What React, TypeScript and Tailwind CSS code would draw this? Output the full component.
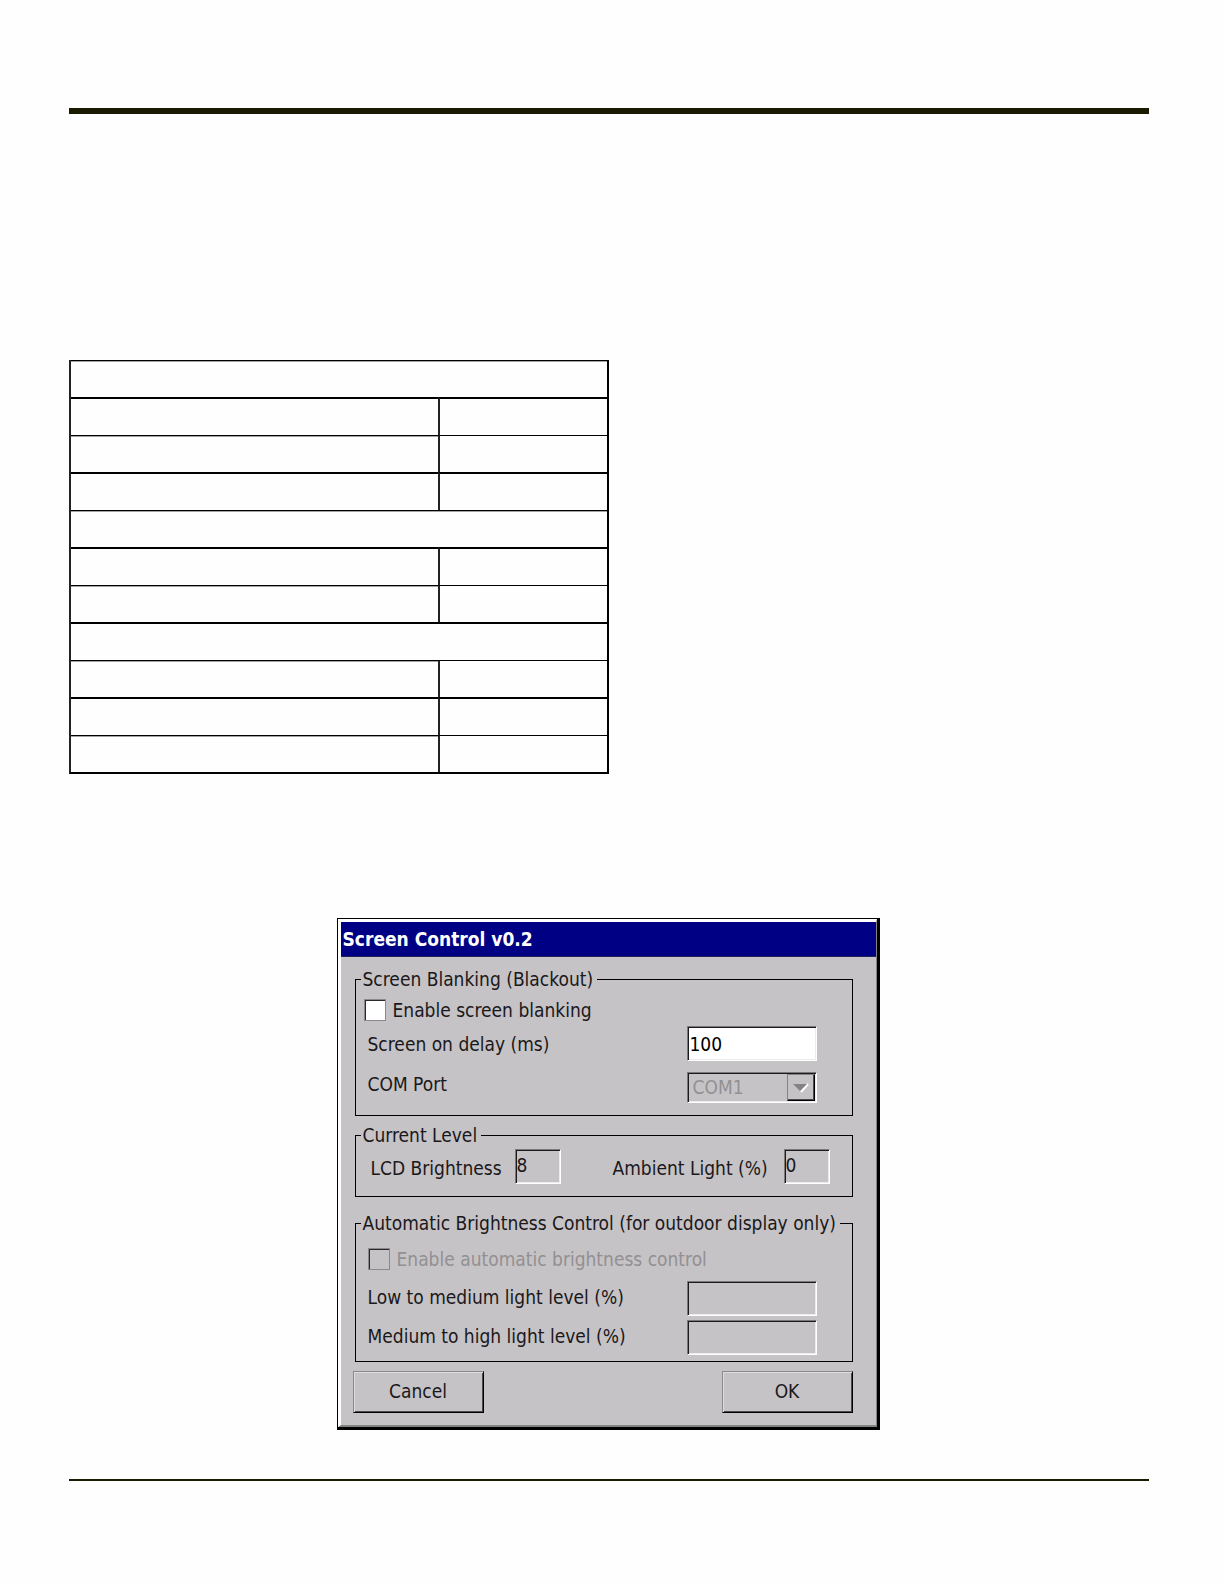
import React from "react";
import type { ReactNode } from "react";

const rows: boolean[] = [true, false, false, false, true, false, false, true, false, false, false];

function SpecTable() {
  return (
    <table className="w-1/2 table-fixed border-separate border-spacing-0 border-x-2 border-b-2 border-black border-l-[#222222]">
      <colgroup>
        <col className="w-[68.5%]" />
        <col />
      </colgroup>
      <tbody>
        {rows.map((full, i) => {
          const size = i % 2 === 0 ? "h-[37px] border-t" : "h-[38px] border-t-2";
          const soft = i % 2 === 0 ? "shadow-[inset_0_1px_0_#a3a3a3]" : "";
          return (
            <tr key={i}>
              {full ? (
                <td colSpan={2} className={`${size} ${soft} border-black p-0`} />
              ) : (
                <>
                  <td className={`${size} ${soft} border-black p-0`} />
                  <td className={`${size} border-l-2 border-black border-l-[#222222] p-0`} />
                </>
              )}
            </tr>
          );
        })}
      </tbody>
    </table>
  );
}

const sunken =
  "border border-t-[#7a787a] border-l-[#7a787a] border-r-white border-b-white shadow-[inset_1px_1px_0_#1c1a1c,inset_-1px_-1px_0_#ececec] rounded-none outline-none";

function Group({
  title,
  className,
  bodyClassName,
  children,
}: {
  title: string;
  className?: string;
  bodyClassName: string;
  children: ReactNode;
}) {
  return (
    <fieldset className={`ml-[2px] min-w-0 border border-black ${className ?? ""}`}>
      <legend className="ml-[5px] pr-1 pl-[2px] leading-6 whitespace-nowrap">{title}</legend>
      <div className={bodyClassName}>{children}</div>
    </fieldset>
  );
}

function Check({ id, label, disabled }: { id: string; label: string; disabled?: boolean }) {
  return (
    <div className="flex h-[22px] items-center gap-[7px]">
      <input
        id={id}
        type="checkbox"
        disabled={disabled}
        className="size-[22px] shrink-0 appearance-none border border-[#8b898b] bg-white shadow-[inset_1px_1px_0_#2a282a] disabled:bg-transparent"
      />
      <label htmlFor={id} className={disabled ? "leading-6 text-[#929092]" : "leading-6"}>
        {label}
      </label>
    </div>
  );
}

function LevelInput({ id, label }: { id: string; label: string }) {
  return (
    <div className="flex h-[35px] items-start justify-between">
      <label htmlFor={id} className="pt-1 leading-6">
        {label}
      </label>
      <input id={id} type="text" disabled className={`h-[35px] w-[130px] bg-transparent px-1 ${sunken}`} />
    </div>
  );
}

function DialogButton({ children }: { children: ReactNode }) {
  return (
    <button
      type="button"
      className="h-[42px] w-[131px] border border-t-[#8b898b] border-r-black border-b-black border-l-[#8b898b] pb-[2px] shadow-[inset_1px_1px_0_#dddbdd,inset_-1px_-1px_0_#4a484a]"
    >
      {children}
    </button>
  );
}

function ScreenControl() {
  return (
    <section
      aria-label="Screen Control"
      className="w-full max-w-[543px] border-t border-r-[3px] border-b-[3px] border-l border-black bg-[#c6c3c6] text-[19px] text-[#1a181a] [font-family:'DejaVu_Sans_Condensed','DejaVu_Sans',sans-serif]"
    >
      <div className="border-t-[3px] border-r border-b-2 border-l-[3px] border-t-white border-r-[#848284] border-b-[#848284] border-l-white">
        <h1 className="h-[35px] border-b border-[#20205a] bg-[#000084] pl-[2px] leading-[34px] font-bold text-white">
          Screen Control v0.2
        </h1>
        <form className="pt-[10px] pr-[23px] pb-3 pl-3">
          <Group title="Screen Blanking (Blackout)" bodyClassName="pt-2 pr-[35px] pb-3">
            <div className="pl-2">
              <Check id="blanking" label="Enable screen blanking" />
            </div>
            <div className="mt-[5px] flex items-start justify-between pl-3">
              <label htmlFor="delay" className="pt-[6px] leading-6">
                Screen on delay (ms)
              </label>
              <input
                id="delay"
                type="text"
                defaultValue="100"
                className={`h-[35px] w-[130px] bg-white px-[2px] text-black ${sunken}`}
              />
            </div>
            <div className="mt-[11px] flex h-[31px] items-start justify-between pl-3">
              <label htmlFor="port" className="leading-6">
                COM Port
              </label>
              <div className="relative">
                <select
                  id="port"
                  disabled
                  className={`block h-[31px] w-[130px] appearance-none bg-transparent pl-[5px] text-[#929092] opacity-100 ${sunken}`}
                >
                  <option>COM1</option>
                </select>
                <span className="pointer-events-none absolute top-[2px] right-[2px] flex h-[27px] w-7 items-center justify-center border border-t-[#848284] border-r-black border-b-black border-l-[#848284] shadow-[inset_-1px_-1px_0_#4a484a]">
                  <svg width="16" height="10" viewBox="0 0 16 10" aria-hidden="true">
                    <path d="M15 1 L8 9" stroke="white" strokeWidth="2" />
                    <path d="M0 1 H14 L7 8 Z" fill="#848284" />
                  </svg>
                </span>
              </div>
            </div>
          </Group>

          <Group title="Current Level" className="mt-[7px]" bodyClassName="pt-[2px] pr-[22px] pb-3 pl-[15px]">
            <div className="flex h-[35px] items-start justify-between">
              <div className="flex items-start">
                <label htmlFor="lcd" className="w-36 pt-[7px] leading-6 whitespace-nowrap">
                  LCD Brightness
                </label>
                <input
                  id="lcd"
                  type="text"
                  readOnly
                  defaultValue="8"
                  className={`h-[35px] w-[46px] bg-transparent pb-[3px] pl-px ${sunken}`}
                />
              </div>
              <div className="flex items-start">
                <label htmlFor="ambient" className="w-[171px] pt-[7px] leading-6 whitespace-nowrap">
                  Ambient Light (%)
                </label>
                <input
                  id="ambient"
                  type="text"
                  readOnly
                  defaultValue="0"
                  className={`h-[35px] w-[46px] bg-transparent pb-[3px] pl-px ${sunken}`}
                />
              </div>
            </div>
          </Group>

          <Group
            title="Automatic Brightness Control (for outdoor display only)"
            className="mt-[14px]"
            bodyClassName="pt-[13px] pr-[35px] pb-[6px] pl-3"
          >
            <Check id="auto" label="Enable automatic brightness control" disabled />
            <div className="mt-[11px] flex flex-col gap-1">
              <LevelInput id="low" label="Low to medium light level (%)" />
              <LevelInput id="high" label="Medium to high light level (%)" />
            </div>
          </Group>

          <div className="mt-[9px] flex justify-between">
            <DialogButton>Cancel</DialogButton>
            <DialogButton>OK</DialogButton>
          </div>
        </form>
      </div>
    </section>
  );
}

export default function App() {
  return (
    <main className="min-h-screen bg-[#fefefe] pt-[108px] pr-[75px] pb-[103px] pl-[69px]">
      <hr className="h-[6px] border-0 bg-[#1a1a00]" />
      <div className="mt-[246px]">
        <SpecTable />
      </div>
      <div className="mt-36 flex justify-center pr-[2px]">
        <ScreenControl />
      </div>
      <hr className="mt-[49px] h-[2px] border-0 bg-[#1a1a00]" />
    </main>
  );
}
